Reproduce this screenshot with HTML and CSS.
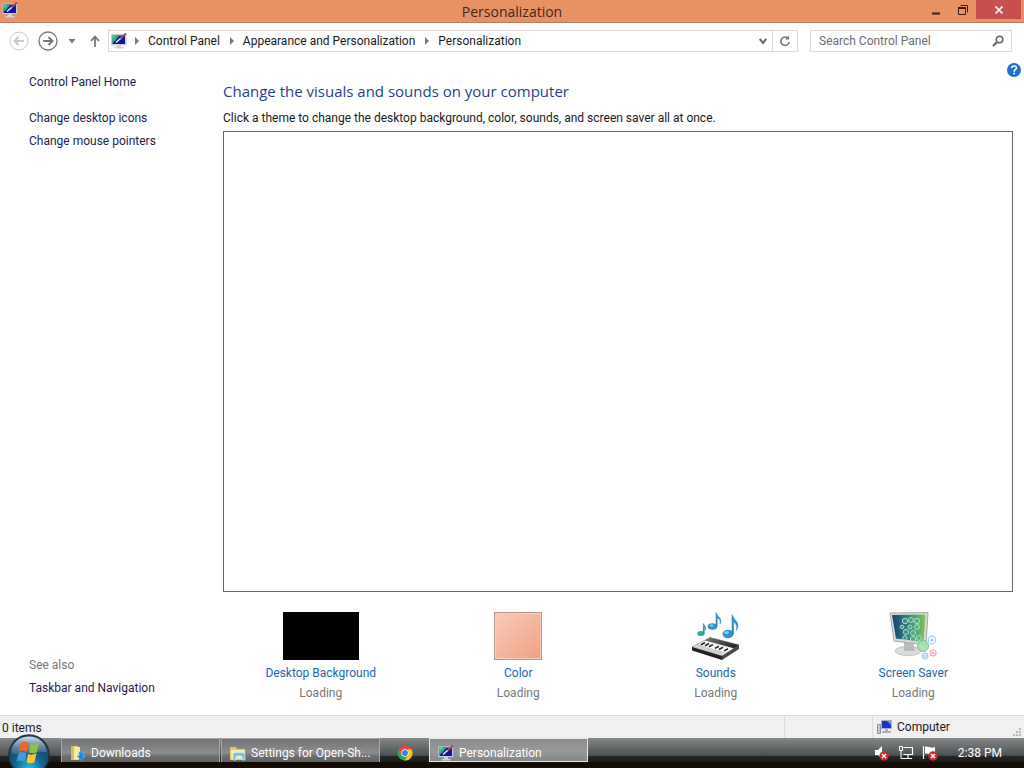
FILE: index.html
```html
<!DOCTYPE html>
<html lang="en">
<head>
    <meta charset="UTF-8">
    <meta name="viewport" content="width=device-width, initial-scale=1.0">
    <title>Personalization</title>
    <link rel="stylesheet" href="styles.css">
</head>
<body>
    <!-- shared icons -->
    <svg class="sprite" aria-hidden="true">
        <symbol id="monitor" viewBox="0 0 16 16">
            <path d="M0.500 1.500h14.500v10.500h-14.500z" fill="#dcdde4" stroke="#a9b4cc" stroke-width="0.600"/>
            <path d="M1.500 2.500h12.500v8.500h-12.500z" fill="#12129c"/>
            <path d="M1.500 2.500h7L4.500 7.500l-3 2.500z" fill="#2fae62"/>
            <path d="M1.500 2.500h4l-4 4z" fill="#58cfa0"/>
            <path d="M15 0.500L9 6" stroke="#a04a5c" stroke-width="2"/>
            <path d="M9.500 5.500L5 9.500" stroke="#eef" stroke-width="1.500"/>
            <path d="M6 12h4v2h2.500v1.500h-9V14H6z" fill="#cfd0d4"/>
        </symbol>
        <symbol id="blocked" viewBox="0 0 10 10">
            <circle cx="5" cy="5" r="4.700" fill="#d3262f"/>
            <path d="M3 3l4 4M7 3L3 7" stroke="#fff" stroke-width="1.500"/>
        </symbol>
    </svg>

    <header class="titlebar">
        <svg class="icon titlebar-icon"><use href="#monitor"/></svg>
        <h1>Personalization</h1>
        <div class="window-buttons">
            <button type="button" aria-label="Minimize"><svg width="12" height="12"><path d="M2 9.500h8" stroke="#3a1d10" stroke-width="2"/></svg></button>
            <button type="button" aria-label="Restore"><svg width="12" height="12" fill="none" stroke="#3a1d10"><path d="M1.500 3.500h7v7h-7z"/><path d="M1 4h8" stroke-width="2"/><path d="M3.500 1.500h7v7"/></svg></button>
            <button type="button" class="close" aria-label="Close"><svg width="10" height="10"><path d="M1.500 1.500l7 7M8.500 1.500l-7 7" stroke="#fff" stroke-width="1.600"/></svg></button>
        </div>
    </header>

    <nav class="toolbar">
        <button type="button" aria-label="Back"><svg width="20" height="20" fill="none" stroke="#c8c8c8"><circle cx="10" cy="10" r="9"/><path d="M15 10H6M9.500 6L5.500 10l4 4" stroke-width="2"/></svg></button>
        <button type="button" aria-label="Forward"><svg width="20" height="20" fill="none" stroke="#777"><circle cx="10" cy="10" r="9" stroke-width="1.300"/><path d="M5 10h9M10.500 6l4 4-4 4" stroke-width="2"/></svg></button>
        <button type="button" class="recent" aria-label="Recent pages"><svg width="8" height="5"><path d="M0.500 0h7L4 4.500z" fill="#777"/></svg></button>
        <button type="button" class="up" aria-label="Up"><svg width="10" height="12" fill="none" stroke="#777" stroke-width="1.800"><path d="M5 12V2M1 6l4-4.500L9 6"/></svg></button>
        <div class="address">
            <svg class="icon"><use href="#monitor"/></svg>
            <svg class="arrow" width="4" height="8"><path d="M0 0l4 4-4 4z"/></svg>
            <a href="#">Control Panel</a>
            <svg class="arrow" width="4" height="8"><path d="M0 0l4 4-4 4z"/></svg>
            <a href="#">Appearance and Personalization</a>
            <svg class="arrow" width="4" height="8"><path d="M0 0l4 4-4 4z"/></svg>
            <a href="#">Personalization</a>
            <button type="button" class="history" aria-label="Previous locations"><svg width="8" height="7" fill="none" stroke="#666" stroke-width="2"><path d="M0.700 1L4 5l3.300-4"/></svg></button>
            <button type="button" class="refresh" aria-label="Refresh"><svg width="12" height="12" fill="none" stroke="#777" stroke-width="1.600"><path d="M9 3.200A4.200 4.200 0 1 0 10.200 7"/><path d="M6 4.500h4V0.500z" fill="#777" stroke="none"/></svg></button>
        </div>
        <div class="search">
            <input type="text" placeholder="Search Control Panel" aria-label="Search Control Panel">
            <svg width="12" height="12" fill="none" stroke="#666"><circle cx="7.500" cy="4.500" r="3.300" stroke-width="1.600"/><path d="M5 7L1 11" stroke-width="2.200"/></svg>
        </div>
    </nav>

    <div class="content">
        <aside class="sidebar">
            <a href="#" class="home">Control Panel Home</a>
            <a href="#">Change desktop icons</a>
            <a href="#">Change mouse pointers</a>
            <div class="see-also">
                <span>See also</span>
                <a href="#">Taskbar and Navigation</a>
            </div>
        </aside>

        <main class="main">
            <a href="#" class="help" aria-label="Help"><svg width="14" height="14" viewBox="0 0 14 14"><circle cx="7" cy="7" r="7" fill="#1b72c8"/><path d="M4.700 5.200C4.700 2.300 9.400 2.300 9.400 5c0 1.700-2.300 1.800-2.300 3.700M7.100 9.800v1.700" fill="none" stroke="#fff" stroke-width="1.600"/></svg></a>
            <h2>Change the visuals and sounds on your computer</h2>
            <p>Click a theme to change the desktop background, color, sounds, and screen saver all at once.</p>
            <div class="themes"></div>

            <div class="settings">
                <div class="setting">
                    <div class="thumb background-thumb"></div>
                    <a href="#">Desktop Background</a>
                    <span>Loading</span>
                </div>
                <div class="setting">
                    <div class="thumb color-thumb"></div>
                    <a href="#">Color</a>
                    <span>Loading</span>
                </div>
                <div class="setting">
                    <svg class="thumb" viewBox="0 0 48 48">
                        <defs>
                            <linearGradient id="keys" x1="0" y1="0" x2="1" y2="1"><stop offset="0" stop-color="#777"/><stop offset="1" stop-color="#181818"/></linearGradient>
                        </defs>
                        <path d="M0 35L18 25.500l29 7.500-17 11z" fill="#eee" stroke="#777" stroke-width="0.700"/>
                        <path d="M0 35l30 9v4L0 38.500z" fill="#222"/>
                        <path d="M30 44l17-11v4L30 48z" fill="#484848"/>
                        <path d="M18 25.500l29 7.500-5 3.300-29-7.800z" fill="url(#keys)"/>
                        <path d="M2 35l27 8 4-2.500-27-8z" fill="#d0d0d0"/>
                        <path d="M12 29l28 8-5 3-28-8z" fill="#fff"/>
                        <path d="M13 30.500l-4 2.200M17 31.500l-4 2.200M21 32.600l-4 2.200M27 34.200l-4 2.200M31 35.300l-4 2.200M36 36.700l-4 2.200" stroke="#222" stroke-width="1.600"/>
                        <g fill="#2b93d6">
                            <ellipse cx="9" cy="21.500" rx="3.600" ry="2.500" fill="#30a39b"/>
                            <path d="M11.300 21V11.500c1 2.500 3.500 3 1.700 7 .5-3-.5-3.500-.8-3.800V21z" stroke="#2878a8" stroke-width="0.500"/>
                            <ellipse cx="20.500" cy="14.500" rx="4.700" ry="3.300"/>
                            <path d="M24 14V0.500c1 4.500 7 5 4 11.500 .8-4-1-5.500-2.800-6V14z" stroke="#2476b0" stroke-width="0.500"/>
                            <ellipse cx="36" cy="22" rx="5.500" ry="4.200"/>
                            <path d="M40 22V2.500c1.500 6 9 7 4.500 16 1-6-1.500-8-3-8.500V22z" stroke="#2476b0" stroke-width="0.500"/>
                        </g>
                        <ellipse cx="34.500" cy="20.500" rx="2.500" ry="1.500" fill="#83cdf2"/>
                        <ellipse cx="19.500" cy="13.500" rx="2" ry="1" fill="#83cdf2"/>
                    </svg>
                    <a href="#">Sounds</a>
                    <span>Loading</span>
                </div>
                <div class="setting">
                    <svg class="thumb" viewBox="0 0 48 48">
                        <defs>
                            <linearGradient id="screen"><stop offset="0" stop-color="#1c3f78"/><stop offset="0.500" stop-color="#2d8a86"/><stop offset="1" stop-color="#8ac25a"/></linearGradient>
                        </defs>
                        <ellipse cx="19" cy="39" rx="13" ry="4.500" fill="#dcdcdc" stroke="#c4c4c4"/>
                        <path d="M15 30h9l2 9H15z" fill="#b9bcbc"/>
                        <path d="M1 1L39 0.500 37 33 5 29z" fill="#d9dad6" stroke="#a6a8a4"/>
                        <path d="M3 3l33.500-0.500L34.500 30 7 26.500z" fill="url(#screen)"/>
                        <g fill="#5db98f" fill-opacity="0.400" stroke="#a9dfc6">
                            <circle cx="16" cy="9" r="2.700"/><circle cx="22" cy="8" r="2.500"/><circle cx="28" cy="9" r="2.700"/>
                            <circle cx="13" cy="15" r="1.800"/><circle cx="21" cy="15" r="2"/><circle cx="28" cy="15" r="2.500"/>
                            <circle cx="17" cy="20" r="2.600"/><circle cx="24" cy="21" r="2.500"/><circle cx="16" cy="26" r="2.200"/><circle cx="24" cy="27" r="2.600"/><circle cx="30" cy="26" r="2.500"/>
                        </g>
                        <circle cx="34" cy="34" r="5.500" fill="#a5dfb1" fill-opacity="0.900" stroke="#79c895"/>
                        <g fill="#fff" fill-opacity="0.700" stroke-width="1.200">
                            <circle cx="43" cy="28" r="3.800" stroke="#9cc9ea"/><path d="M41 28h4M43 26v4" stroke="#9cc9ea"/>
                            <circle cx="44" cy="41" r="3" stroke="#eba6c0"/><circle cx="44" cy="41" r="1" stroke="#eba6c0"/>
                            <circle cx="36" cy="44" r="2.800" stroke="#a9c8e8"/><circle cx="36" cy="44" r="1" stroke="#a9c8e8"/>
                        </g>
                    </svg>
                    <a href="#">Screen Saver</a>
                    <span>Loading</span>
                </div>
            </div>
        </main>
    </div>

    <div class="statusbar">
        <span class="count">0 items</span>
        <span class="zone"></span>
        <span class="computer">
            <svg width="16" height="16"><path d="M0.500 5.500h3v9h-3z" fill="#c5c8ce" stroke="#8b919c"/><path d="M4.500 1.500h10v8h-10z" fill="#1c35c8" stroke="#aab2c8"/><path d="M10 2h4v4z" fill="#6f92f0"/><path d="M8 10h3v2h3v2H5v-2h3z" fill="#aab0bc"/></svg>
            Computer
        </span>
        <svg class="grip" width="10" height="10" fill="#b8b8b8"><path d="M7 0h2v2h-2zM4 3h2v2h-2zM7 3h2v2h-2zM1 6h2v2h-2zM4 6h2v2h-2zM7 6h2v2h-2z"/></svg>
    </div>

    <footer class="taskbar">
        <button type="button" class="start" aria-label="Start">
            <svg width="42" height="42" viewBox="0 0 42 42">
                <defs>
                    <radialGradient id="orb" cx="0.500" cy="0.850" r="0.800"><stop offset="0" stop-color="#29c3f2"/><stop offset="0.450" stop-color="#12628f"/><stop offset="1" stop-color="#1b3c58"/></radialGradient>
                    <linearGradient id="shine" x1="0" y1="0" x2="0" y2="1"><stop offset="0" stop-color="#e8f3f8" stop-opacity="0.900"/><stop offset="1" stop-color="#7898ac" stop-opacity="0.300"/></linearGradient>
                </defs>
                <circle cx="21" cy="21" r="20" fill="url(#orb)" stroke="#203646" stroke-width="1.500"/>
                <path d="M3 19C4-3 38-3 39 19c-10-4-24 4-36 0z" fill="url(#shine)"/>
                <path d="M13 9c3-2 5-1 8 0l-2 9c-3-1-5-2-8 0z" fill="#ee6432"/>
                <path d="M22.500 10c3 1 5 1 8.500-1l-2 9c-3 2-5 1-8 0.500z" fill="#8bc53f"/>
                <path d="M10.500 19.500c3-2 5-1 8 0l-2 8.500c-3-1-5-2-8 0z" fill="#4599de"/>
                <path d="M20 20c3 1 5 1 8.500-1l-2 9c-3 2-5 1-8 0.500z" fill="#fbc72f"/>
            </svg>
        </button>
        <button type="button" class="task">
            <svg width="16" height="16"><path d="M1 1h6l2 2v12H1z" fill="#ecd77a"/><path d="M3 2h7v12H3z" fill="#f8eba6"/><path d="M1 1h3v14H1z" fill="#d9bc5a"/><path d="M9 7h4v4h2l-4 4.500L7 11h2z" fill="#2387d8" stroke="#75bdf0" stroke-width="0.600"/></svg>
            Downloads
        </button>
        <button type="button" class="task">
            <svg width="16" height="16"><path d="M0 2h6l1 2h8v11H0z" fill="#e2c766"/><path d="M1 5h14v9H1z" fill="#f7eba8"/><path d="M3 15V9c0-2 12-2 12 0v6h-3v-4H6v4z" fill="#6fbde0" stroke="#d6f0fa" stroke-width="0.700"/></svg>
            Settings for Open-Sh...
        </button>
        <button type="button" class="chrome" aria-label="Chrome">
            <svg width="16" height="16" viewBox="0 0 16 16"><circle cx="8" cy="8" r="7.500" fill="#2da94f"/><path d="M1.500 4.200A7.500 7.500 0 0 1 14.500 4.200H8L4.700 10z" fill="#ea4335"/><path d="M14.500 4.200A7.500 7.500 0 0 1 7.500 15.500L11.300 9.500 11 4.200z" fill="#fbc116"/><circle cx="8" cy="8" r="3.700" fill="#fff"/><circle cx="8" cy="8" r="2.900" fill="#3b7ded"/></svg>
        </button>
        <button type="button" class="task active">
            <svg class="icon"><use href="#monitor"/></svg>
            Personalization
        </button>
        <div class="tray">
            <svg width="16" height="16"><path d="M1 5h3l4-4v13l-4-4H1z" fill="#fff"/><use href="#blocked" x="5" y="6" width="10" height="10"/></svg>
            <svg width="16" height="16" fill="none" stroke="#fff"><path d="M5.500 2.500h9v7h-9M10 10v3M6 13.500h8" stroke-width="1.200"/><path d="M1.500 1.500h3v4h-3zM3 6v7.500h3"/></svg>
            <svg width="16" height="16"><path d="M1.500 1v13" stroke="#fff" stroke-width="1.200"/><path d="M3 2c3-1.500 5 2 10 0v7c-5 2-7-1.500-10 0z" fill="#fff"/><use href="#blocked" x="6" y="6" width="10" height="10"/></svg>
            <time>2:38 PM</time>
        </div>
    </footer>
</body>
</html>
```

FILE: styles.css
```css
* {
    box-sizing: border-box;
}

body {
    margin: 0;
    min-height: 100vh;
    display: flex;
    flex-direction: column;
    background-color: #fff;
    color: #1a1a1a;
    font-family: Roboto, "Open Sans", sans-serif;
    font-size: 12px;
    line-height: 16px;
}

h1,
h2 {
    font-family: "Open Sans", Roboto, sans-serif;
    font-weight: normal;
}

a {
    color: inherit;
    text-decoration: none;
}

svg {
    display: block;
    flex: none;
}

button {
    display: flex;
    align-items: center;
    justify-content: center;
    padding: 0;
    border: none;
    background: none;
    font: inherit;
}

.sprite {
    position: absolute;
    width: 0;
    height: 0;
}

.icon {
    width: 16px;
    height: 16px;
}

/* title bar */
.titlebar {
    display: grid;
    grid-template-columns: 1fr auto 1fr;
    height: 23px;
    background-color: #e89264;
    border-bottom: 1px solid #b87f64;
}

.titlebar-icon {
    margin: 2px;
}

.titlebar h1 {
    margin: 0;
    font-size: 14px;
    line-height: 24px;
    color: #40261a;
}

.window-buttons {
    display: flex;
    justify-content: flex-end;
    padding-right: 3px;
}

.window-buttons button {
    width: 27px;
    height: 19px;
}

.window-buttons .close {
    width: 45px;
    background-color: #c75050;
}

/* navigation bar */
.toolbar {
    display: flex;
    align-items: center;
    height: 36px;
    padding: 0 12px 0 9px;
}

.toolbar > button {
    width: 20px;
    height: 20px;
    margin-right: 9px;
}

.toolbar > .recent {
    width: 10px;
    margin-right: 6px;
}

.toolbar > .up {
    width: 24px;
    margin-right: 1px;
}

.address {
    flex: 1;
    display: flex;
    align-items: center;
    height: 22px;
    padding-left: 2px;
    border: 1px solid #d9d9d9;
}

.arrow {
    margin: 0 9px 0 10px;
    fill: #777;
}

.address .icon + .arrow {
    margin-left: 8px;
}

.history {
    width: 18px;
    height: 20px;
    margin-left: auto;
}

.refresh {
    width: 25px;
    height: 20px;
    border-left: 1px solid #d9d9d9;
}

.search {
    display: flex;
    align-items: center;
    width: 202px;
    height: 22px;
    margin-left: 12px;
    padding: 0 7px 0 8px;
    border: 1px solid #d9d9d9;
}

.search input {
    flex: 1;
    min-width: 0;
    padding: 0;
    border: none;
    outline: none;
    font: inherit;
}

.search input::placeholder {
    color: #6d6d6d;
}

/* page */
.content {
    flex: 1;
    display: flex;
}

.sidebar {
    display: flex;
    flex-direction: column;
    gap: 7px;
    width: 223px;
    padding: 15px 0 19px 29px;
    color: #1d1d4f;
}

.home {
    margin-bottom: 13px;
}

.see-also {
    display: flex;
    flex-direction: column;
    gap: 7px;
    margin-top: auto;
}

.see-also span {
    color: #777;
}

.main {
    position: relative;
    flex: 1;
    display: flex;
    flex-direction: column;
    padding: 20px 11px 14px 0;
}

.help {
    position: absolute;
    top: 4px;
    right: 3px;
}

.main h2 {
    margin: 0 0 7px;
    font-size: 15px;
    line-height: 24px;
    color: #1f3f8c;
}

.main p {
    margin: 0 0 5px;
}

.themes {
    flex: 1;
    border: 1px solid #666;
}

.settings {
    display: grid;
    grid-template-columns: repeat(4, 1fr);
    margin: 20px 1px 0 -1px;
}

.setting {
    display: flex;
    flex-direction: column;
    align-items: center;
    gap: 4px;
}

.setting a {
    color: #1a66ae;
}

.setting span {
    color: #777;
}

.thumb {
    width: 48px;
    height: 48px;
    margin-bottom: 1px;
}

.background-thumb {
    width: 76px;
    background-color: #000;
}

.color-thumb {
    border: 1px solid #b3998c;
    background: linear-gradient(135deg, #f8cdb8, #f0a080);
    box-shadow: inset 0 0 0 1px #f6cdb9;
}

/* status bar */
.statusbar {
    display: flex;
    height: 23px;
    line-height: 24px;
    border-top: 1px solid #d7d7d7;
    background-color: #f0f0f0;
}

.count {
    flex: 1;
    padding-left: 2px;
}

.zone {
    width: 88px;
    border-left: 1px solid #dcdcdc;
}

.computer {
    display: flex;
    align-items: center;
    gap: 4px;
    width: 140px;
    padding-left: 4px;
    border-left: 1px solid #dcdcdc;
}

.grip {
    align-self: flex-end;
    margin-right: 2px;
}

/* taskbar */
.taskbar {
    position: relative;
    display: flex;
    height: 30px;
    padding: 0 22px 0 61px;
    color: #fff;
    background: linear-gradient(#858788, #4e5152 58%, #262829 60%, #1c1c1b 78%, #120c06 82%, #150c05);
}

.start {
    position: absolute;
    left: 8px;
    top: -4px;
    height: 34px;
    align-items: flex-start;
    overflow: hidden;
}

.task {
    justify-content: flex-start;
    gap: 5px;
    width: 159px;
    height: 24px;
    padding: 5px 8px 0;
    border: 1px solid #a4a6a7;
    border-bottom: none;
    background: linear-gradient(#707273, #8b8d8e 60%, #6c6e6f 75%, #606263);
    color: #fff;
    white-space: nowrap;
}

.task + .task {
    margin-left: 1px;
}

.task.active {
    border: 1px solid #e8e8e8;
    background: linear-gradient(#8a8c8d, #969899 55%, #858788);
}

.chrome {
    width: 49px;
    height: 30px;
}

.tray {
    display: flex;
    align-items: center;
    gap: 8px;
    margin-left: auto;
}

.tray time {
    margin-left: 12px;
}
```
